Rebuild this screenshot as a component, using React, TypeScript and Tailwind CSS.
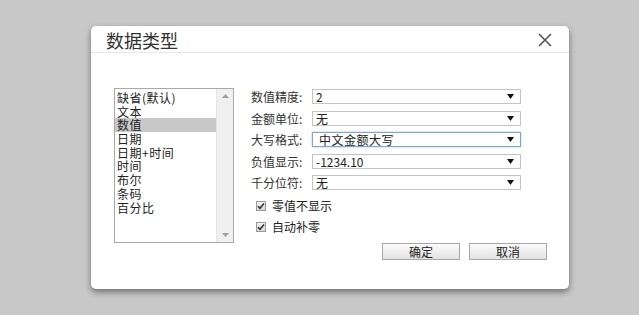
import { useState } from 'react';

const types = ['缺省(默认)', '文本', '数值', '日期', '日期+时间', '时间', '布尔', '条码', '百分比'];

const fields = [
  { label: '数值精度:', value: '2' },
  { label: '金额单位:', value: '无' },
  { label: '大写格式:', value: '中文金额大写', focus: true },
  { label: '负值显示:', value: '-1234.10' },
  { label: '千分位符:', value: '无' },
];

function Arrow() {
  return (
    <svg width="7" height="5" viewBox="0 0 7 5" className="shrink-0">
      <path d="M0 0H7L3.5 5Z" fill="#111" />
    </svg>
  );
}

function Check({ label }: { label: string }) {
  const [on, setOn] = useState(true);
  return (
    <label className="flex items-center h-[21px] leading-[15px] pl-[5px] cursor-default" onClick={() => setOn(!on)}>
      <span className="w-[10px] h-[10px] border border-[#9a9a9a] bg-gradient-to-b from-[#f4f4f4] to-[#d6d6d6] flex items-center justify-center">
        {on && (
          <svg width="8" height="8" viewBox="0 0 8 8">
            <path d="M1 4.2L3 6.2L7 1.5" stroke="#333" strokeWidth="1.6" fill="none" />
          </svg>
        )}
      </span>
      <span className="ml-[6px]">{label}</span>
    </label>
  );
}

export default function App() {
  const [selected, setSelected] = useState(2);

  return (
    <div
      className="w-[639px] h-[315px] bg-[#c8c8c8] pt-[26px] pl-[91px] text-[12px] text-[#222]"
      style={{ fontFamily: '"Noto Sans CJK SC", "Liberation Sans", sans-serif' }}
    >
      <div className="w-[478px] h-[263px] bg-white rounded-[5px] shadow-[0_3px_6px_rgba(0,0,0,0.45)] flex flex-col">
        {/* header */}
        <div className="h-[27px] border-b border-[#e6e6e6] flex items-center justify-between pl-[15px] pr-[17px] pt-[2px]">
          <span className="text-[18px] text-[#333] leading-none">数据类型</span>
          <svg width="14" height="14" viewBox="0 0 14 14">
            <path d="M1 1L13 13M13 1L1 13" stroke="#555" strokeWidth="1.6" />
          </svg>
        </div>

        <div className="flex pt-[35px] pl-[23px]">
          {/* type list */}
          <div className="w-[120px] h-[155px] border border-[#a9a9a9] flex">
            <div className="flex-1 pt-[2px]">
              {types.map((t, i) => (
                <div
                  key={t}
                  onClick={() => setSelected(i)}
                  className={`pl-[2px] h-[13.7px] leading-[13.7px] text-[12px] tracking-[0.5px] ${i === selected ? 'bg-[#c8c8c8]' : ''}`}
                >
                  {t}
                </div>
              ))}
            </div>
            <div className="w-[17px] bg-[#f0f0f0] border-l border-[#e6e6e6] flex flex-col justify-between items-center py-[5px]">
              <svg width="7" height="4" viewBox="0 0 7 4">
                <path d="M0 4L3.5 0L7 4Z" fill="#a0a0a0" />
              </svg>
              <svg width="7" height="4" viewBox="0 0 7 4">
                <path d="M0 0H7L3.5 4Z" fill="#a0a0a0" />
              </svg>
            </div>
          </div>

          {/* fields */}
          <div className="ml-[17px] pt-[1px] flex flex-col leading-[15px]">
            <div className="flex flex-col gap-[6.5px]">
              {fields.map((f) => (
                <div key={f.label} className="flex items-center h-[15px]">
                  <span className="w-[61px] text-[#333]">{f.label}</span>
                  <div
                    className={`w-[209px] h-[15px] flex items-center justify-between pl-[3px] pr-[6px] bg-white ${
                      f.focus ? 'border border-[#7ea6d8] shadow-[0_0_2px_#9fc2ea]' : 'border border-[#c4c4c4]'
                    }`}
                  >
                    <span className={f.focus ? 'pl-[3px] tracking-[0.5px]' : ''}>{f.value}</span>
                    <Arrow />
                  </div>
                </div>
              ))}
            </div>
            <div className="mt-[5px] flex flex-col">
              <Check label="零值不显示" />
              <Check label="自动补零" />
            </div>
            <div className="flex gap-[9px] mt-[6px] pl-[131px]">
              {['确定', '取消'].map((b) => (
                <button
                  key={b}
                  className="w-[78px] h-[17px] shrink-0 border border-[#a8a8a8] bg-gradient-to-b from-[#fbfbfb] to-[#e2e2e2] text-[12px] leading-none text-[#222]"
                >
                  {b}
                </button>
              ))}
            </div>
          </div>
        </div>
      </div>
    </div>
  );
}
